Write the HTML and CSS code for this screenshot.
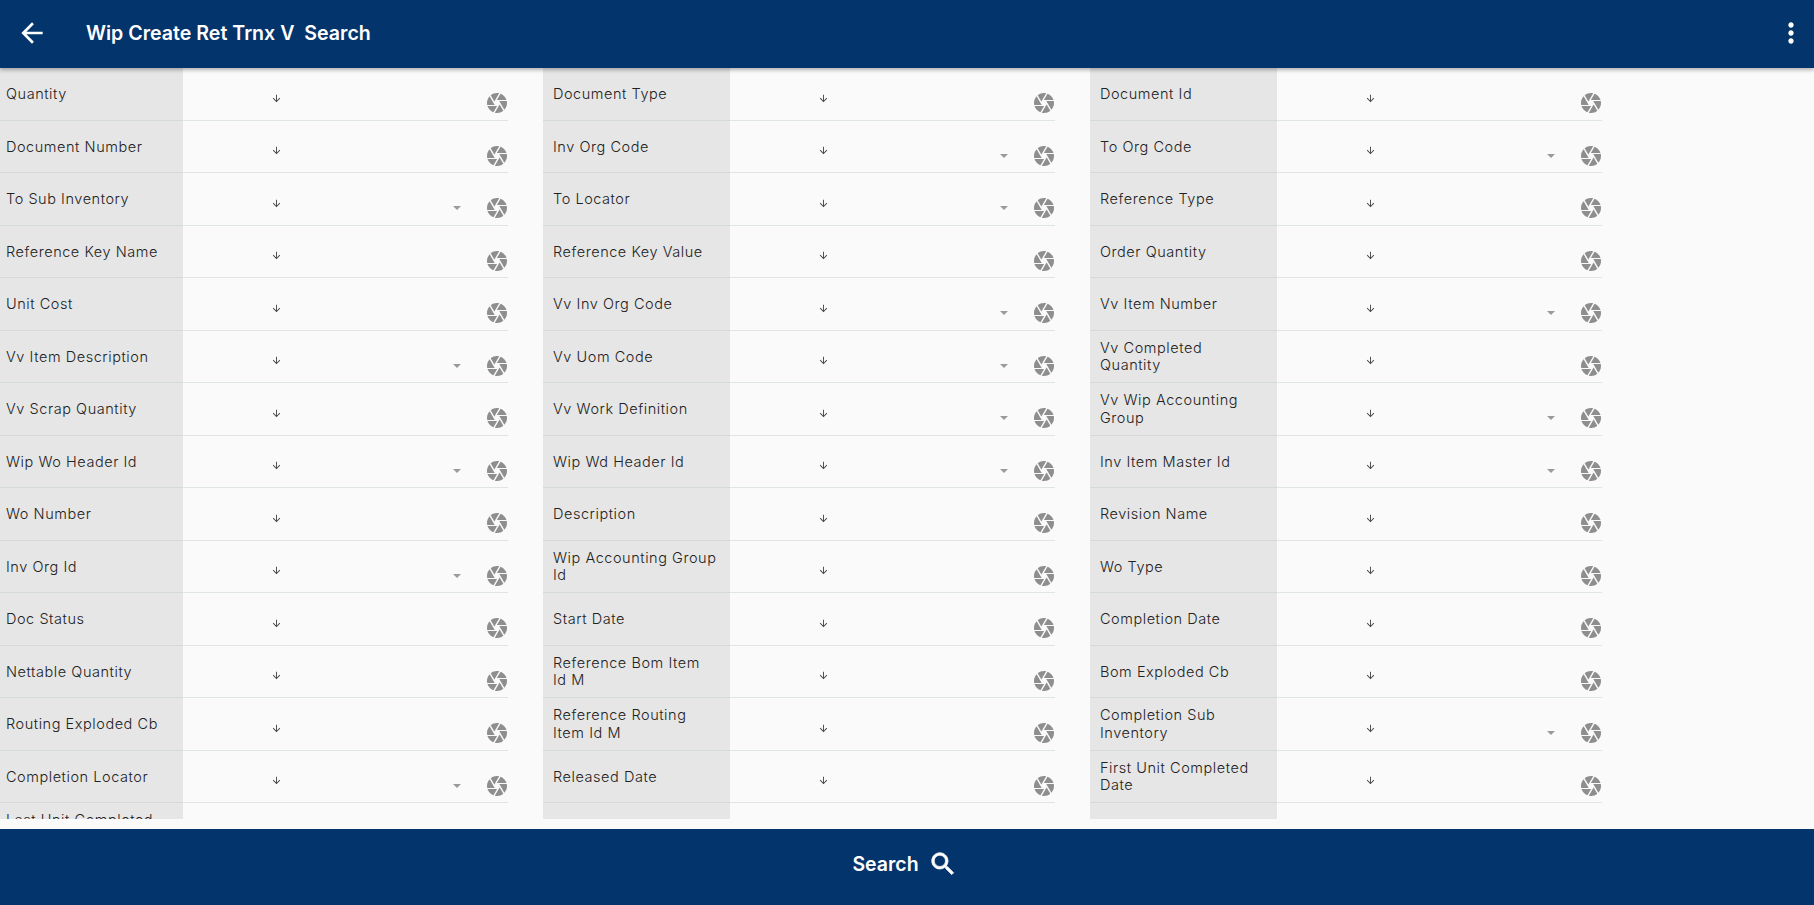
FILE: index.html
```html
<!DOCTYPE html>
<html lang="en">
<head>
    <meta charset="UTF-8">
    <title>Wip Create Ret Trnx V Search</title>
    <link rel="stylesheet" href="styles.css">
</head>
<body>
    <svg class="icon-defs" width="0" height="0">
        <symbol id="i-arrow" viewBox="0 0 24 24"><path d="M20 11H7.83l5.59-5.59L12 4l-8 8 8 8 1.41-1.41L7.83 13H20z"/></symbol>
        <symbol id="i-more" viewBox="0 0 24 24"><path d="M12 8c1.1 0 2-.9 2-2s-.9-2-2-2-2 .9-2 2 .9 2 2 2zm0 2c-1.1 0-2 .9-2 2s.9 2 2 2 2-.9 2-2-.9-2-2-2zm0 6c-1.1 0-2 .9-2 2s.9 2 2 2 2-.9 2-2-.9-2-2-2z"/></symbol>
        <symbol id="i-search" viewBox="0 0 24 24"><path d="M15.5 14h-.79l-.28-.27C15.41 12.59 16 11.11 16 9.5 16 5.91 13.09 3 9.5 3S3 5.91 3 9.5 5.91 16 9.5 16c1.61 0 3.09-.59 4.23-1.57l.27.28v.79l5 4.99L20.49 19l-4.99-5zm-6 0C7.01 14 5 11.99 5 9.5S7.01 5 9.5 5 14 7.01 14 9.5 11.99 14 9.5 14z"/></symbol>
        <symbol id="i-down" viewBox="0 0 24 24"><path d="M20 12l-1.41-1.41L13 16.17V4h-2v12.17l-5.58-5.59L4 12l8 8 8-8z"/></symbol>
        <symbol id="i-shutter" viewBox="0 0 24 24"><path d="M9.4 10.5l4.77-8.26C13.47 2.09 12.75 2 12 2c-2.4 0-4.6.85-6.32 2.25l3.66 6.35.06-.1zM21.54 9c-.92-2.92-3.15-5.26-6-6.34L11.88 9h9.66zm.26 1h-7.49l.29.5 4.76 8.25C21 16.97 22 14.61 22 12c0-.69-.07-1.35-.2-2zM8.54 12l-3.9-6.75C3.01 7.03 2 9.39 2 12c0 .69.07 1.35.2 2h7.49l-1.15-2zm-6.08 3c.92 2.92 3.15 5.26 6 6.34L12.12 15H2.46zm11.27 0l-3.9 6.76c.7.15 1.42.24 2.17.24 2.4 0 4.6-.85 6.32-2.25l-3.66-6.35-.93 1.6z"/></symbol>
    </svg>

    <div class="page">
        <header class="toolbar">
            <svg class="back-icon"><use href="#i-arrow"/></svg>
            <h1>Wip Create Ret Trnx V  Search</h1>
            <svg class="more-icon"><use href="#i-more"/></svg>
        </header>

        <main class="content">
            <div class="form-grid">
                <div class="field"><label>Quantity</label><div class="value"><svg class="sort"><use href="#i-down"/></svg><svg class="shutter"><use href="#i-shutter"/></svg></div></div>
                <div class="field"><label>Document Type</label><div class="value"><svg class="sort"><use href="#i-down"/></svg><svg class="shutter"><use href="#i-shutter"/></svg></div></div>
                <div class="field"><label>Document Id</label><div class="value"><svg class="sort"><use href="#i-down"/></svg><svg class="shutter"><use href="#i-shutter"/></svg></div></div>

                <div class="field"><label>Document Number</label><div class="value"><svg class="sort"><use href="#i-down"/></svg><svg class="shutter"><use href="#i-shutter"/></svg></div></div>
                <div class="field"><label>Inv Org Code</label><div class="value"><svg class="sort"><use href="#i-down"/></svg><span class="caret"></span><svg class="shutter"><use href="#i-shutter"/></svg></div></div>
                <div class="field"><label>To Org Code</label><div class="value"><svg class="sort"><use href="#i-down"/></svg><span class="caret"></span><svg class="shutter"><use href="#i-shutter"/></svg></div></div>

                <div class="field"><label>To Sub Inventory</label><div class="value"><svg class="sort"><use href="#i-down"/></svg><span class="caret"></span><svg class="shutter"><use href="#i-shutter"/></svg></div></div>
                <div class="field"><label>To Locator</label><div class="value"><svg class="sort"><use href="#i-down"/></svg><span class="caret"></span><svg class="shutter"><use href="#i-shutter"/></svg></div></div>
                <div class="field"><label>Reference Type</label><div class="value"><svg class="sort"><use href="#i-down"/></svg><svg class="shutter"><use href="#i-shutter"/></svg></div></div>

                <div class="field"><label>Reference Key Name</label><div class="value"><svg class="sort"><use href="#i-down"/></svg><svg class="shutter"><use href="#i-shutter"/></svg></div></div>
                <div class="field"><label>Reference Key Value</label><div class="value"><svg class="sort"><use href="#i-down"/></svg><svg class="shutter"><use href="#i-shutter"/></svg></div></div>
                <div class="field"><label>Order Quantity</label><div class="value"><svg class="sort"><use href="#i-down"/></svg><svg class="shutter"><use href="#i-shutter"/></svg></div></div>

                <div class="field"><label>Unit Cost</label><div class="value"><svg class="sort"><use href="#i-down"/></svg><svg class="shutter"><use href="#i-shutter"/></svg></div></div>
                <div class="field"><label>Vv Inv Org Code</label><div class="value"><svg class="sort"><use href="#i-down"/></svg><span class="caret"></span><svg class="shutter"><use href="#i-shutter"/></svg></div></div>
                <div class="field"><label>Vv Item Number</label><div class="value"><svg class="sort"><use href="#i-down"/></svg><span class="caret"></span><svg class="shutter"><use href="#i-shutter"/></svg></div></div>

                <div class="field"><label>Vv Item Description</label><div class="value"><svg class="sort"><use href="#i-down"/></svg><span class="caret"></span><svg class="shutter"><use href="#i-shutter"/></svg></div></div>
                <div class="field"><label>Vv Uom Code</label><div class="value"><svg class="sort"><use href="#i-down"/></svg><span class="caret"></span><svg class="shutter"><use href="#i-shutter"/></svg></div></div>
                <div class="field"><label>Vv Completed Quantity</label><div class="value"><svg class="sort"><use href="#i-down"/></svg><svg class="shutter"><use href="#i-shutter"/></svg></div></div>

                <div class="field"><label>Vv Scrap Quantity</label><div class="value"><svg class="sort"><use href="#i-down"/></svg><svg class="shutter"><use href="#i-shutter"/></svg></div></div>
                <div class="field"><label>Vv Work Definition</label><div class="value"><svg class="sort"><use href="#i-down"/></svg><span class="caret"></span><svg class="shutter"><use href="#i-shutter"/></svg></div></div>
                <div class="field"><label>Vv Wip Accounting Group</label><div class="value"><svg class="sort"><use href="#i-down"/></svg><span class="caret"></span><svg class="shutter"><use href="#i-shutter"/></svg></div></div>

                <div class="field"><label>Wip Wo Header Id</label><div class="value"><svg class="sort"><use href="#i-down"/></svg><span class="caret"></span><svg class="shutter"><use href="#i-shutter"/></svg></div></div>
                <div class="field"><label>Wip Wd Header Id</label><div class="value"><svg class="sort"><use href="#i-down"/></svg><span class="caret"></span><svg class="shutter"><use href="#i-shutter"/></svg></div></div>
                <div class="field"><label>Inv Item Master Id</label><div class="value"><svg class="sort"><use href="#i-down"/></svg><span class="caret"></span><svg class="shutter"><use href="#i-shutter"/></svg></div></div>

                <div class="field"><label>Wo Number</label><div class="value"><svg class="sort"><use href="#i-down"/></svg><svg class="shutter"><use href="#i-shutter"/></svg></div></div>
                <div class="field"><label>Description</label><div class="value"><svg class="sort"><use href="#i-down"/></svg><svg class="shutter"><use href="#i-shutter"/></svg></div></div>
                <div class="field"><label>Revision Name</label><div class="value"><svg class="sort"><use href="#i-down"/></svg><svg class="shutter"><use href="#i-shutter"/></svg></div></div>

                <div class="field"><label>Inv Org Id</label><div class="value"><svg class="sort"><use href="#i-down"/></svg><span class="caret"></span><svg class="shutter"><use href="#i-shutter"/></svg></div></div>
                <div class="field"><label>Wip Accounting Group Id</label><div class="value"><svg class="sort"><use href="#i-down"/></svg><svg class="shutter"><use href="#i-shutter"/></svg></div></div>
                <div class="field"><label>Wo Type</label><div class="value"><svg class="sort"><use href="#i-down"/></svg><svg class="shutter"><use href="#i-shutter"/></svg></div></div>

                <div class="field"><label>Doc Status</label><div class="value"><svg class="sort"><use href="#i-down"/></svg><svg class="shutter"><use href="#i-shutter"/></svg></div></div>
                <div class="field"><label>Start Date</label><div class="value"><svg class="sort"><use href="#i-down"/></svg><svg class="shutter"><use href="#i-shutter"/></svg></div></div>
                <div class="field"><label>Completion Date</label><div class="value"><svg class="sort"><use href="#i-down"/></svg><svg class="shutter"><use href="#i-shutter"/></svg></div></div>

                <div class="field"><label>Nettable Quantity</label><div class="value"><svg class="sort"><use href="#i-down"/></svg><svg class="shutter"><use href="#i-shutter"/></svg></div></div>
                <div class="field"><label>Reference Bom Item Id M</label><div class="value"><svg class="sort"><use href="#i-down"/></svg><svg class="shutter"><use href="#i-shutter"/></svg></div></div>
                <div class="field"><label>Bom Exploded Cb</label><div class="value"><svg class="sort"><use href="#i-down"/></svg><svg class="shutter"><use href="#i-shutter"/></svg></div></div>

                <div class="field"><label>Routing Exploded Cb</label><div class="value"><svg class="sort"><use href="#i-down"/></svg><svg class="shutter"><use href="#i-shutter"/></svg></div></div>
                <div class="field"><label>Reference Routing Item Id M</label><div class="value"><svg class="sort"><use href="#i-down"/></svg><svg class="shutter"><use href="#i-shutter"/></svg></div></div>
                <div class="field"><label>Completion Sub Inventory</label><div class="value"><svg class="sort"><use href="#i-down"/></svg><span class="caret"></span><svg class="shutter"><use href="#i-shutter"/></svg></div></div>

                <div class="field"><label>Completion Locator</label><div class="value"><svg class="sort"><use href="#i-down"/></svg><span class="caret"></span><svg class="shutter"><use href="#i-shutter"/></svg></div></div>
                <div class="field"><label>Released Date</label><div class="value"><svg class="sort"><use href="#i-down"/></svg><svg class="shutter"><use href="#i-shutter"/></svg></div></div>
                <div class="field"><label>First Unit Completed Date</label><div class="value"><svg class="sort"><use href="#i-down"/></svg><svg class="shutter"><use href="#i-shutter"/></svg></div></div>

                <div class="field"><label>Last Unit Completed Date</label><div class="value"></div></div>
                <div class="field"><label></label><div class="value"></div></div>
                <div class="field"><label></label><div class="value"></div></div>
            </div>
        </main>

        <footer class="action-bar">
            <span>Search</span>
            <svg class="search-icon"><use href="#i-search"/></svg>
        </footer>
    </div>
</body>
</html>
```

FILE: styles.css
```css
body, html {
    font-family: 'Inter', 'Roboto', sans-serif;
    margin: 0;
    padding: 0;
    height: 100%;
    overflow: hidden;
    color: #333;
    background-color: #fafafa;
}
.icon-defs {
    display: block;
    height: 0;
}
.page {
    display: flex;
    flex-direction: column;
    height: 100vh;
}
.toolbar {
    flex: 0 0 68px;
    box-sizing: border-box;
    padding-bottom: 2px;
    display: flex;
    align-items: center;
    background-color: #03346b;
    color: #fff;
    box-shadow: 0 2px 4px rgba(0,0,0,0.3);
    position: relative;
    z-index: 1;
}
.toolbar h1 {
    margin: 0 0 0 38px;
    font-size: 19.6px;
    font-weight: 600;
    white-space: pre;
}
.back-icon {
    width: 32px;
    height: 32px;
    margin-left: 16px;
    fill: #fff;
}
.more-icon {
    width: 32px;
    height: 32px;
    margin-left: auto;
    margin-right: 7px;
    fill: #fff;
}
.content {
    flex: 1;
    margin-bottom: 10px;
    overflow: hidden;
}
.form-grid {
    display: grid;
    grid-template-columns: repeat(3, 512px);
    grid-auto-rows: 52.5px;
    column-gap: 35px;
    margin-left: -4.5px;
}
.field {
    display: flex;
    border-bottom: 1px solid #dfe4e6;
}
.field label {
    flex: 0 0 187.5px;
    box-sizing: border-box;
    display: flex;
    align-items: center;
    padding: 0 13px 0 10.5px;
    margin-bottom: -1px;
    background-color: #e6e6e6;
    border-bottom: 1px solid #d4d9da;
    font-size: 14.5px;
    font-weight: 300;
    line-height: 17.5px;
    letter-spacing: 0.55px;
    color: #222;
}
.value {
    flex: 1;
    display: flex;
    align-items: center;
}
.sort {
    width: 11px;
    height: 11px;
    margin: 9px 0 0 87.5px;
    fill: #444;
}
.caret {
    width: 0;
    height: 0;
    margin: 19px 24px 0 auto;
    border-left: 4px solid transparent;
    border-right: 4px solid transparent;
    border-top: 4px solid #9a9a9a;
}
.shutter {
    width: 24px;
    height: 24px;
    margin: 19px -1px 0 0;
    fill: #8e8e8e;
}
.sort + .shutter {
    margin-left: auto;
}
.action-bar {
    flex: 0 0 76px;
    box-sizing: border-box;
    padding: 0 4px 6px 0;
    display: flex;
    align-items: center;
    justify-content: center;
    background-color: #03346b;
    color: #fff;
    font-size: 19.5px;
    font-weight: 600;
}
.search-icon {
    width: 30px;
    height: 30px;
    margin-left: 9px;
    fill: #fff;
    stroke: #fff;
    stroke-width: 0.6;
}
```
